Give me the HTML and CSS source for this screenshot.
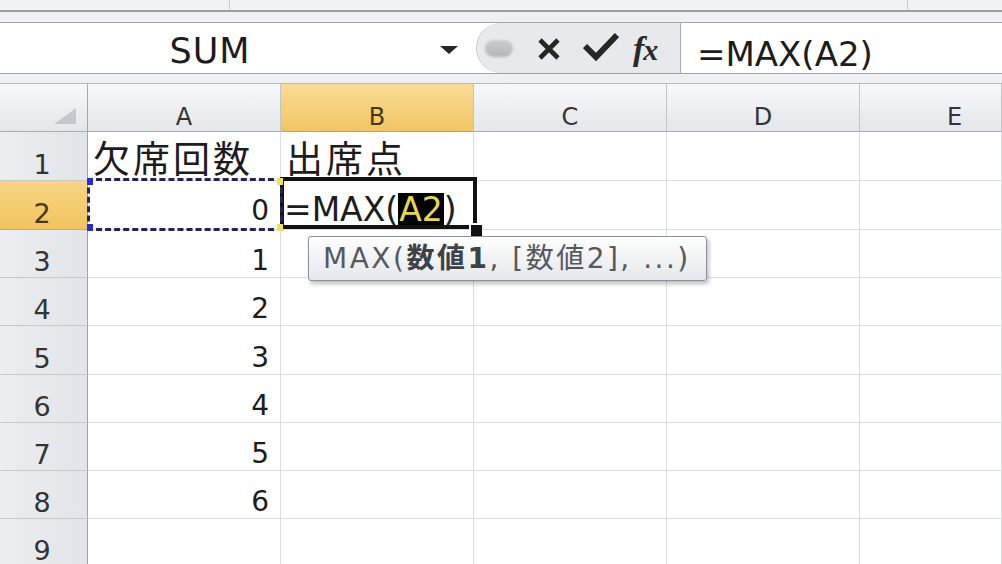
FILE: index.html
```html
<!DOCTYPE html>
<html lang="ja">
<head>
<meta charset="utf-8">
<title>Excel MAX</title>
<link rel="stylesheet" href="styles.css">
</head>
<body>
<div class="ribbon"><div class="rb rb1"></div><div class="rb rb2"></div><div class="rb rb3"></div></div>
<div class="band"></div>
<div class="fbar">
  <div class="namebox"><span class="nbtext">SUM</span><span class="nbarrow"></span></div>
  <div class="tools">
    <span class="blob"></span>
    <svg class="ic-x" width="24" height="24" viewBox="0 0 24 24"><path d="M3 3 L21 21 M21 3 L3 21" stroke="#262626" stroke-width="4.6" stroke-linecap="butt" fill="none"/></svg>
    <svg class="ic-ok" width="36" height="30" viewBox="0 0 36 30"><path d="M2 14 L13 25 L34 3" stroke="#262626" stroke-width="6" stroke-linejoin="miter" fill="none"/></svg>
    <span class="fx">f<span class="x">x</span></span>
  </div>
  <div class="finput">=MAX(A2)</div>
</div>
<div class="gap"></div>
<div class="grid">
  <div class="c h corner"><svg width="22" height="16" viewBox="0 0 22 16"><path d="M22 0 L22 16 L0 16 Z" fill="#c4c7cb"/></svg></div>
  <div class="c h">A</div>
  <div class="c h selcol">B</div>
  <div class="c h">C</div>
  <div class="c h">D</div>
  <div class="c h hE">E</div>

  <div class="c rh">1</div>
  <div class="c jp">欠席回数</div>
  <div class="c jp">出席点</div>
  <div class="c"></div><div class="c"></div><div class="c"></div>

  <div class="c rh selrow">2</div>
  <div class="c num a2">0<span class="marquee"><i class="q tl"></i><i class="q bl"></i><i class="q tr"></i><i class="q br"></i></span></div>
  <div class="c b2">=MAX(<span class="hl">A2</span>)<span class="edit"><span class="handle"></span></span><div class="tip">MAX(<b>数値1</b>, [数値2], ...)</div></div>
  <div class="c"></div><div class="c"></div><div class="c"></div>

  <div class="c rh">3</div><div class="c num">1</div><div class="c"></div><div class="c"></div><div class="c"></div><div class="c"></div>
  <div class="c rh">4</div><div class="c num">2</div><div class="c"></div><div class="c"></div><div class="c"></div><div class="c"></div>
  <div class="c rh">5</div><div class="c num">3</div><div class="c"></div><div class="c"></div><div class="c"></div><div class="c"></div>
  <div class="c rh">6</div><div class="c num">4</div><div class="c"></div><div class="c"></div><div class="c"></div><div class="c"></div>
  <div class="c rh">7</div><div class="c num">5</div><div class="c"></div><div class="c"></div><div class="c"></div><div class="c"></div>
  <div class="c rh">8</div><div class="c num">6</div><div class="c"></div><div class="c"></div><div class="c"></div><div class="c"></div>
  <div class="c rh">9</div><div class="c"></div><div class="c"></div><div class="c"></div><div class="c"></div><div class="c"></div>
</div>
</body>
</html>
```

FILE: styles.css
```css
html, body {
  margin: 0;
  padding: 0;
}
body {
  width: 1002px;
  height: 564px;
  overflow: hidden;
  background: #ffffff;
  font-family: "DejaVu Sans", "Noto Sans CJK JP", sans-serif;
  color: #1c1c1c;
}

/* top ribbon remnant */
.ribbon {
  height: 10px;
  display: flex;
  background: #f0f2f5;
  border-bottom: 2px solid #9ca0a5;
}
.rb1 { width: 229px; border-right: 1px solid #c6cacf; }
.rb2 { width: 677px; border-right: 1px solid #c6cacf; }
.rb3 { flex: 1; }

.band {
  height: 10px;
  background: #eef0f3;
}

/* formula bar */
.fbar {
  display: flex;
  height: 50px;
  border-top: 1px solid #a3a7ac;
  border-bottom: 1px solid #9ea2a7;
  background: #ffffff;
}
.namebox {
  width: 476px;
  display: flex;
  align-items: center;
}
.nbtext {
  flex: 1;
  text-align: center;
  font-size: 35px;
  line-height: 1;
  padding-right: 20px;
  margin-top: 6px;
  letter-spacing: 1px;
}
.nbarrow {
  width: 0;
  height: 0;
  border-left: 9px solid transparent;
  border-right: 9px solid transparent;
  border-top: 8px solid #262626;
  margin-right: 18px;
  margin-top: 3px;
}
.tools {
  display: flex;
  align-items: center;
  background: #e7e9ec;
  border-left: 1px solid #c3c6ca;
  border-right: 1px solid #a8acb1;
  border-radius: 25px 0 0 25px;
  box-sizing: border-box;
  width: 205px;
}
.blob {
  width: 28px;
  height: 17px;
  margin-left: 8px;
  border-radius: 9px;
  background: linear-gradient(#cbcdd0, #b3b6ba);
  filter: blur(1.2px);
}
.ic-x {
  margin-left: 24px;
  margin-top: 2px;
}
.ic-ok {
  margin-left: 22px;
  margin-top: -2px;
}
.fx {
  margin-left: 14px;
  font-family: "Liberation Serif", serif;
  font-style: italic;
  font-weight: bold;
  font-size: 34px;
  color: #2a2a2a;
  line-height: 1;
  margin-top: 2px;
}
.fx .x {
  font-size: 30px;
  margin-left: -1px;
}
.finput {
  flex: 1;
  display: flex;
  align-items: center;
  padding-left: 16px;
  font-size: 34px;
  line-height: 1;
  padding-top: 11px;
  box-sizing: border-box;
}

.gap {
  height: 9px;
  background: #eef0f3;
  border-bottom: 1px solid #b7bbc0;
}

/* grid */
.grid {
  display: grid;
  grid-template-columns: 88px 193px 193px 193px 193px 1fr;
  grid-template-rows: 48px 49px 49px 48px 48px 49px 48px 48px 48px 48px;
}
.c {
  border-right: 1px solid #dadcdf;
  border-bottom: 1px solid #dadcdf;
  display: flex;
  align-items: flex-end;
  line-height: 1;
  white-space: nowrap;
  min-width: 0;
}
.h {
  background: linear-gradient(#f7f8fa, #e3e6ea);
  border-right-color: #c1c5ca;
  border-bottom-color: #a9aeb3;
  justify-content: center;
  font-size: 24px;
  color: #333;
  padding-bottom: 2px;
}
.hE {
  padding-left: 48px;
}
.corner {
  justify-content: flex-end;
  padding-right: 11px;
  padding-bottom: 7px;
  border-right-color: #a3a8ae;
}
.selcol {
  background: linear-gradient(#f9dc98, #f2c562);
  border-bottom-color: #df9f38;
  color: #4a3a12;
}
.rh {
  background: linear-gradient(to right, #eceef1, #e1e4e8);
  border-right-color: #a0a5ab;
  border-bottom-color: #c5c9ce;
  justify-content: center;
  font-size: 27px;
  color: #333;
  padding-bottom: 2px;
  padding-right: 3px;
}
.selrow {
  background: linear-gradient(#f8d585, #f2c35e);
  border-right-color: #d99a35;
  border-bottom-color: #e0a53f;
  color: #4a3a12;
}
.num {
  justify-content: flex-end;
  padding-right: 11px;
  font-size: 28px;
  padding-bottom: 2px;
}
.jp {
  font-family: "Noto Sans CJK JP", sans-serif;
  font-size: 37px;
  letter-spacing: 3px;
  padding-left: 5px;
  padding-bottom: 6px;
  line-height: 0.9;
}
.a2 {
  position: relative;
  padding-bottom: 4px;
}
.marquee {
  position: absolute;
  left: -1px;
  top: -3px;
  right: -3px;
  bottom: -2px;
  border: 3px dashed #23235c;
  z-index: 3;
}
.q {
  position: absolute;
  width: 6px;
  height: 7px;
}
.q.tl { left: -3px; top: -3px; background: #2a2ad0; }
.q.bl { left: -3px; bottom: -3px; background: #2a2ad0; }
.q.tr { right: -3px; top: -3px; background: #e9e25a; }
.q.br { right: -3px; bottom: -3px; background: #e9e25a; }

.b2 {
  position: relative;
  font-size: 33px;
  padding-left: 3px;
  padding-bottom: 3px;
}
.hl {
  background: #000;
  color: #e6d84e;
  padding: 0 1px;
}
.edit {
  position: absolute;
  left: -1px;
  top: -4px;
  width: 189px;
  height: 44px;
  border: 4px solid #111;
  z-index: 2;
}
.handle {
  position: absolute;
  right: -9px;
  bottom: -11px;
  width: 11px;
  height: 11px;
  background: #111;
  border-left: 2px solid #fff;
  border-top: 2px solid #fff;
}
.tip {
  position: absolute;
  left: 27px;
  top: 55px;
  width: 399px;
  height: 45px;
  box-sizing: border-box;
  border: 1px solid #8d9298;
  border-radius: 3px;
  background: linear-gradient(#fefefe, #e5e7ea);
  box-shadow: 2px 3px 4px rgba(0, 0, 0, 0.25);
  font-size: 28px;
  color: #55595f;
  letter-spacing: 2.5px;
  padding-left: 14px;
  display: flex;
  align-items: center;
  white-space: nowrap;
  z-index: 4;
  line-height: 1;
}
.tip b {
  font-weight: 600;
  color: #3e4146;
}
```
